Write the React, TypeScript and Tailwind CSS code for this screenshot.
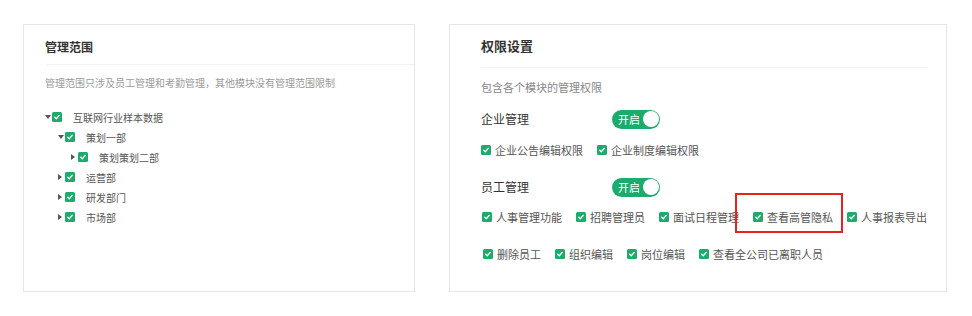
import React from 'react';

const GREEN = 'bg-[#1bab6c]';

function Check() {
  return (
    <span className={`inline-flex w-[10px] h-[10px] shrink-0 items-center justify-center rounded-[1.5px] ${GREEN}`}>
      <svg width="8" height="8" viewBox="0 0 8 8">
        <path d="M1.8 4.3 L3.3 5.7 L6.2 2.4" stroke="#fff" strokeWidth="1.4" fill="none" strokeLinecap="round" strokeLinejoin="round" />
      </svg>
    </span>
  );
}

function Caret({ open }: { open: boolean }) {
  return (
    <span className="w-[7px] h-[20px] flex items-center justify-start">
      {open ? (
        <svg width="6" height="4" viewBox="0 0 6 4"><path d="M0 0 L6 0 L3 4 Z" fill="#555" /></svg>
      ) : (
        <svg width="4" height="6" viewBox="0 0 4 6"><path d="M0 0 L4 3 L0 6 Z" fill="#555" /></svg>
      )}
    </span>
  );
}

type Node = { label: string; level: number; open: boolean };

const tree: Node[] = [
  { label: '互联网行业样本数据', level: 0, open: true },
  { label: '策划一部', level: 1, open: true },
  { label: '策划策划二部', level: 2, open: false },
  { label: '运营部', level: 1, open: false },
  { label: '研发部门', level: 1, open: false },
  { label: '市场部', level: 1, open: false },
];

const indent = ['pl-0', 'pl-[13px]', 'pl-[26px]'];

function Toggle() {
  return (
    <div className={`relative w-[48px] h-[19px] rounded-full ${GREEN} flex items-center`}>
      <span className="pl-[6px] text-[11px] leading-none text-white">开启</span>
      <span className="absolute right-[1px] top-[1.5px] w-[16px] h-[16px] rounded-full bg-white" />
    </div>
  );
}

function Item({ label, mark }: { label: string; mark?: boolean }) {
  return (
    <div className="relative flex items-center gap-[4px] mr-[14px] h-[16px]">
      <Check />
      <span className="text-[11px] leading-[16px] text-[#555] whitespace-nowrap">{label}</span>
      {mark && (
        <span className="absolute -left-[18px] -right-[10px] -top-[16px] -bottom-[8px] border-2 border-[#e8231f]" />
      )}
    </div>
  );
}

export default function App() {
  return (
    <div
      className="w-[972px] h-[316px] bg-white flex items-start gap-[34px] pt-[24px] pl-[23px]"
      style={{ fontFamily: '"Noto Sans CJK SC", "Noto Sans", sans-serif' }}
    >
      {/* 管理范围 */}
      <div className="w-[392px] h-[268px] border border-[#e6e6e6] pt-[14px]">
        <div className="pl-[21px] text-[12px] leading-[16px] font-bold text-[#333]">管理范围</div>
        <div className="mt-[9px] ml-[23px] h-px bg-[#f2f2f2]" />
        <div className="mt-[11px] pl-[21px] text-[10px] leading-[14px] text-[#9a9a9a]">
          管理范围只涉及员工管理和考勤管理，其他模块没有管理范围限制
        </div>
        <div className="mt-[17px] pl-[21px]">
          {tree.map((n) => (
            <div key={n.label} className={`flex items-center h-[20px] ${indent[n.level]}`}>
              <Caret open={n.open} />
              <Check />
              <span className="ml-[11px] text-[10px] text-[#555]">{n.label}</span>
            </div>
          ))}
        </div>
      </div>

      {/* 权限设置 */}
      <div className="w-[498px] h-[268px] border border-[#e6e6e6] pt-[12px] pl-[31px] pr-[18px]">
        <div className="text-[13px] leading-[18px] font-bold text-[#333]">权限设置</div>
        <div className="mt-[12px] h-px bg-[#f2f2f2]" />
        <div className="mt-[11px] text-[11px] leading-[16px] text-[#888]">包含各个模块的管理权限</div>

        <div className="mt-[14px] flex items-center h-[20px]">
          <span className="w-[131px] text-[12px] text-[#333]">企业管理</span>
          <Toggle />
        </div>
        <div className="mt-[13px] flex items-center">
          <Item label="企业公告编辑权限" />
          <Item label="企业制度编辑权限" />
        </div>

        <div className="mt-[19px] flex items-center h-[20px]">
          <span className="w-[131px] text-[12px] text-[#333]">员工管理</span>
          <Toggle />
        </div>
        <div className="mt-[12px] flex items-center pl-[1px]">
          <Item label="人事管理功能" />
          <Item label="招聘管理员" />
          <Item label="面试日程管理" />
          <Item label="查看高管隐私" mark />
          <Item label="人事报表导出" />
        </div>
        <div className="mt-[21px] flex items-center pl-[2px]">
          <Item label="删除员工" />
          <Item label="组织编辑" />
          <Item label="岗位编辑" />
          <Item label="查看全公司已离职人员" />
        </div>
      </div>
    </div>
  );
}
